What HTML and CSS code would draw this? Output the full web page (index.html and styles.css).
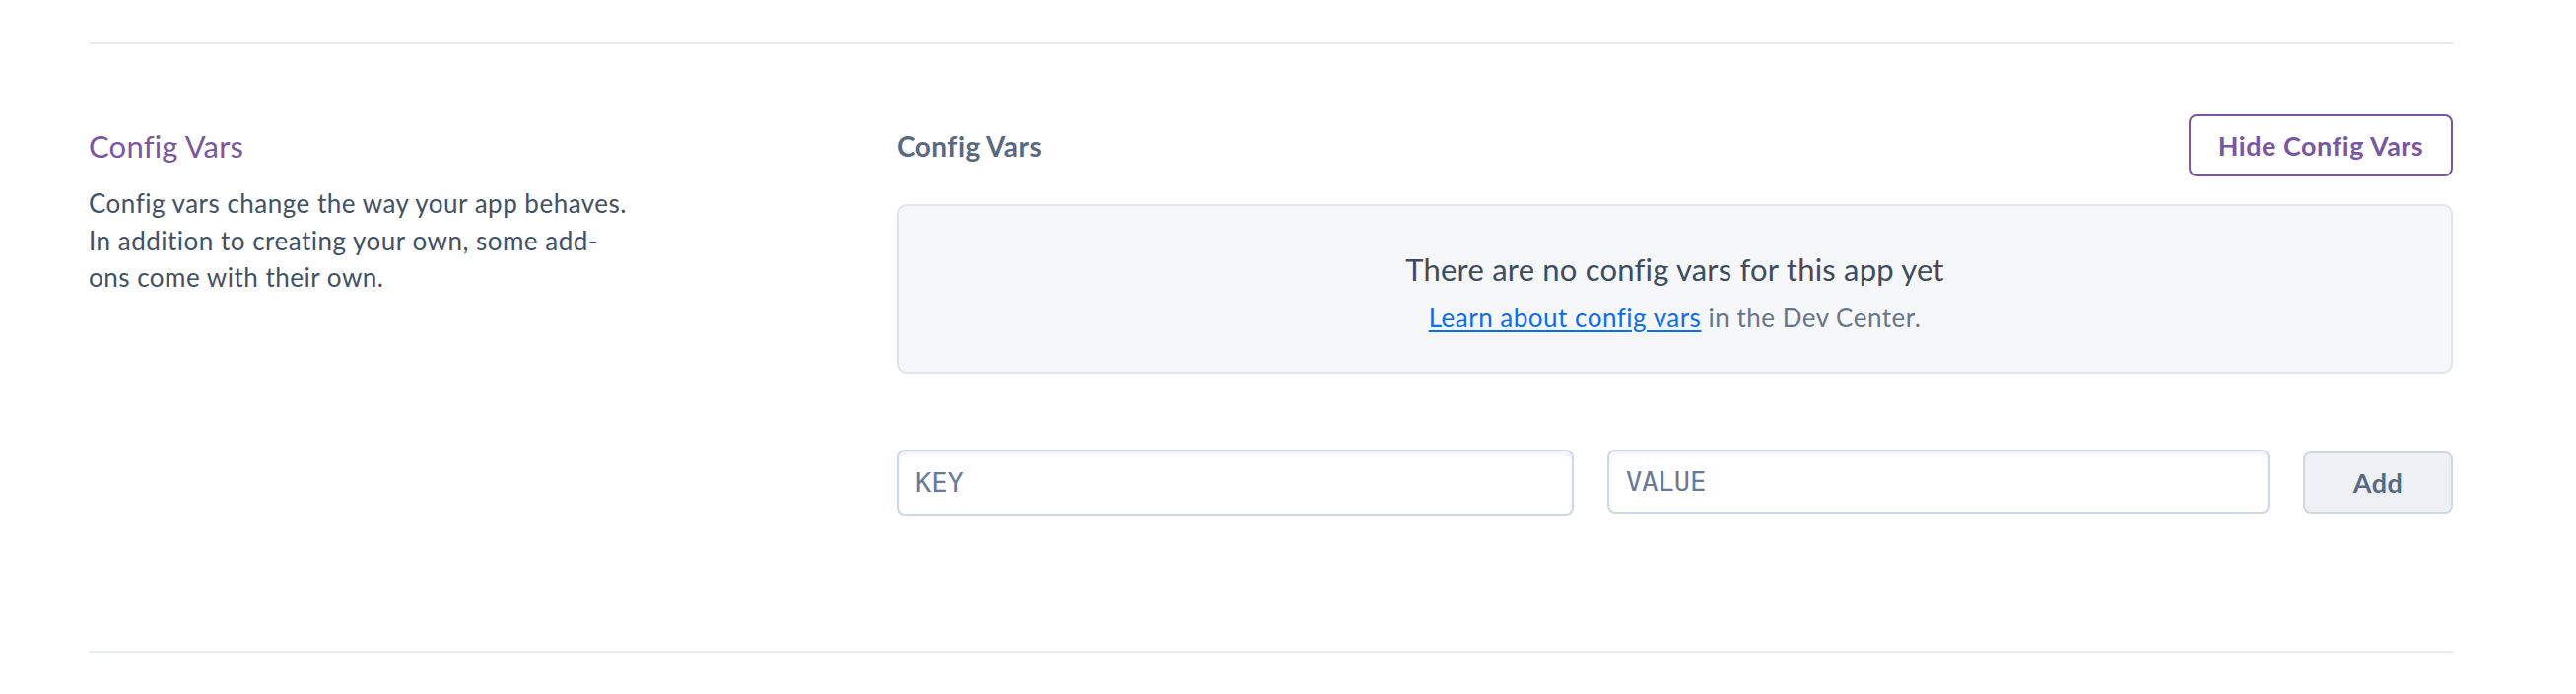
FILE: index.html
```html
<!DOCTYPE html>
<html lang="en">
<head>
<meta charset="utf-8">
<title>Config Vars</title>
<link rel="stylesheet" href="styles.css">
</head>
<body>
<div class="page">
  <section class="settings-section">
    <div class="section-intro">
      <h3 class="section-title">Config Vars</h3>
      <p class="section-desc">Config vars change the way your app behaves. In addition to creating your own, some add-ons come with their own.</p>
    </div>
    <div class="section-body">
      <div class="body-header">
        <h4 class="body-title">Config Vars</h4>
        <button class="btn btn-outline" type="button">Hide Config Vars</button>
      </div>
      <div class="empty-panel">
        <p class="empty-title">There are no config vars for this app yet</p>
        <p class="empty-sub"><a class="link" href="#">Learn about config vars</a> in the Dev Center.</p>
      </div>
      <form class="add-row">
        <input class="field field-key" type="text" placeholder="KEY">
        <input class="field field-value" type="text" placeholder="VALUE">
        <button class="btn btn-add" type="button">Add</button>
      </form>
    </div>
  </section>
</div>
</body>
</html>
```

FILE: styles.css
```css
* { box-sizing: border-box; }

html, body {
  margin: 0;
  background: #ffffff;
}

body {
  font-family: Lato, "Noto Sans", "Liberation Sans", sans-serif;
  color: #3f4b5e;
}

.page {
  padding: 43px 125px 0 90px;
}

.settings-section {
  display: grid;
  grid-template-columns: 820px 1fr;
  border-top: 2px solid #e8ebf1;
  border-bottom: 2px solid #e8ebf1;
  padding: 71px 0 137px;
}

.section-intro {
  padding-top: 14px;
}

.section-title {
  margin: 0;
  font-size: 31px;
  line-height: 36px;
  font-weight: 400;
  letter-spacing: 0.2px;
  color: #79589f;
}

.section-desc {
  margin: 22px 0 0;
  width: 550px;
  font-size: 26px;
  line-height: 37.5px;
  letter-spacing: 0.5px;
  color: #435166;
}

.section-body {
  display: flex;
  flex-direction: column;
}

.body-header {
  display: flex;
  align-items: center;
  justify-content: space-between;
  height: 63px;
}

.body-title {
  margin: 0;
  font-size: 28px;
  font-weight: 700;
  letter-spacing: 0.5px;
  color: #596981;
}

.btn {
  font-family: inherit;
  font-weight: 700;
  font-size: 27px;
  letter-spacing: 0.5px;
  border-radius: 8px;
  cursor: pointer;
}

.btn-outline {
  height: 63px;
  width: 268px;
  background: #ffffff;
  border: 2px solid #79589f;
  color: #79589f;
}

.empty-panel {
  margin-top: 28px;
  height: 172px;
  padding-top: 6px;
  background: #f6f7f9;
  border: 2px solid #e2e4e8;
  border-radius: 10px;
  display: flex;
  flex-direction: column;
  align-items: center;
  justify-content: center;
  text-align: center;
}

.empty-title {
  margin: 0;
  font-size: 31px;
  line-height: 40px;
  letter-spacing: 0.2px;
  color: #3f4b5e;
}

.empty-sub {
  margin: 12px 0 0;
  font-size: 26px;
  line-height: 34px;
  letter-spacing: 0.5px;
  color: #66768d;
}

.link {
  color: #0d6ee6;
  text-decoration: underline;
  text-underline-offset: 3px;
}

.add-row {
  margin: 77px 0 0;
  display: grid;
  grid-template-columns: 687fr 672fr 152px;
  column-gap: 34px;
  align-items: start;
}

.field {
  font-family: "DejaVu Sans Mono", "Liberation Mono", monospace;
  font-size: 27px;
  letter-spacing: 0;
  color: #3f4b5e;
  background: #ffffff;
  border: 2px solid #cfd7e6;
  border-radius: 8px;
  padding: 0 17px;
  box-shadow: inset 0 3px 4px rgba(207, 215, 230, 0.35);
  outline: none;
}

.field::placeholder {
  color: #687a95;
}

.field-key {
  height: 67px;
}

.field-value {
  height: 65px;
}

.btn-add {
  margin-top: 2px;
  height: 63px;
  background: #eef0f5;
  border: 2px solid #cfd7e6;
  color: #596981;
}
```
